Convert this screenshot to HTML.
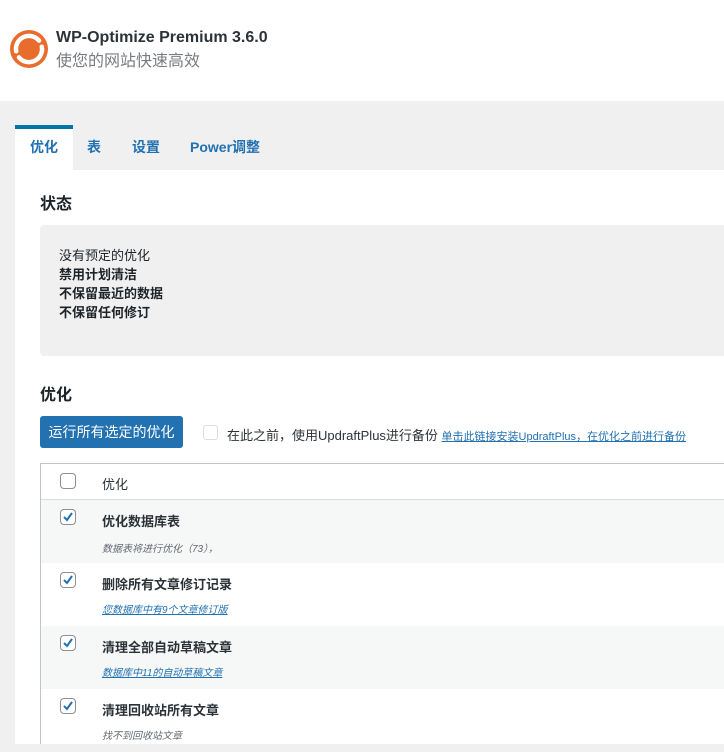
<!DOCTYPE html>
<html><head><meta charset="utf-8"><style>
*{margin:0;padding:0;box-sizing:border-box}
body{width:724px;height:744px;overflow:hidden;background:#f0f0f1;font-family:"Liberation Sans","Noto Sans CJK SC",sans-serif;color:#1d2327;position:relative}
.hdr{position:absolute;left:0;top:0;width:724px;height:101px;background:#fff}
.logo{position:absolute;left:9px;top:29px}
.t1{position:absolute;left:56px;top:29px;font-size:16px;font-weight:bold;color:#2c3338}
.t2{position:absolute;left:56px;top:47px;font-size:16px;color:#787c82}
.tab{position:absolute;top:137px;font-size:14px;font-weight:bold;color:#2271b1}
.act{position:absolute;left:15px;top:125px;width:58px;height:46px;background:#fff;border-top:4px solid #0073aa}
.main{position:absolute;left:15px;top:170px;width:709px;height:574px;background:#fff}
h2{position:absolute;left:40px;font-size:16px;font-weight:bold;color:#1d2327}
.status{position:absolute;left:40px;top:225px;width:684px;height:131px;background:#f0f0f1;border-radius:4px 0 0 4px;font-size:13px;line-height:19px;padding:21px 0 0 19px}
.btn{position:absolute;left:40px;top:416px;width:143px;height:32px;background:#2271b1;border-radius:3px;color:#fff;font-size:14px;line-height:32px;text-align:center}
.cb0{position:absolute;left:203px;top:425px;width:15px;height:15px;border:1px solid #ddd;border-radius:3px}
.bk{position:absolute;left:227px;top:425px;font-size:13px;color:#2c3338}
.bk a{color:#2271b1;font-size:11px;text-decoration:underline}
.tbl{position:absolute;left:40px;top:463px;width:684px;height:281px;border:1px solid #c3c4c7;border-right:none;border-bottom:none}
.row{position:absolute;left:0;width:684px;height:63px}
.cb{position:absolute;left:19px;width:16px;height:16px;border:1px solid #8c8f94;border-radius:4px;background:#fff}
.cb svg{position:absolute;left:0;top:0}
.nm{position:absolute;left:61px;font-size:13px;font-weight:bold;color:#2c3338}
.ds{position:absolute;left:61px;font-size:10px;font-style:italic;color:#646970}
.ds.l{color:#2271b1;text-decoration:underline}
</style></head><body>
<div class="hdr">
<svg class="logo" width="40" height="40" viewBox="0 0 40 40"><circle cx="20" cy="20" r="19" fill="#e86c2c"/><path d="M7.2 22.3 A13 13 0 0 1 30 11.6" fill="none" stroke="#fff" stroke-width="4.5" stroke-linecap="round"/><path d="M32.8 17.7 A13 13 0 0 1 10 28.4" fill="none" stroke="#fff" stroke-width="4.5" stroke-linecap="round"/><circle cx="20" cy="20" r="6.5" fill="#e86c2c"/></svg>
<div class="t1">WP-Optimize Premium 3.6.0</div>
<div class="t2">使您的网站快速高效</div>
</div>
<div class="act"></div>
<div class="tab" style="left:30px">优化</div>
<div class="tab" style="left:87px">表</div>
<div class="tab" style="left:132px">设置</div>
<div class="tab" style="left:190px">Power调整</div>
<div class="main"></div>
<h2 style="top:190px">状态</h2>
<div class="status">没有预定的优化<br><b>禁用计划清洁</b><br><b>不保留最近的数据</b><br><b>不保留任何修订</b></div>
<h2 style="top:381px">优化</h2>
<div class="btn">运行所有选定的优化</div>
<div class="cb0"></div>
<div class="bk">在此之前，使用UpdraftPlus进行备份 <a>单击此链接安装UpdraftPlus，在优化之前进行备份</a></div>
<div class="tbl">
<div class="row" style="top:0;height:36px;border-bottom:1px solid #dcdcde"><div class="cb" style="top:9px"></div><div class="nm" style="top:10px;font-weight:normal">优化</div></div>
<div class="row" style="top:36px;background:#f6f7f7"><div class="cb" style="top:9px"><svg width="14" height="14"><path d="M3 7l3 3 5-7" fill="none" stroke="#2271b1" stroke-width="2"/></svg></div><div class="nm" style="top:11px">优化数据库表</div><div class="ds" style="top:40px">数据表将进行优化（73），</div></div>
<div class="row" style="top:99px"><div class="cb" style="top:9px"><svg width="14" height="14"><path d="M3 7l3 3 5-7" fill="none" stroke="#2271b1" stroke-width="2"/></svg></div><div class="nm" style="top:11px">删除所有文章修订记录</div><div class="ds l" style="top:38px">您数据库中有9个文章修订版</div></div>
<div class="row" style="top:162px;background:#f6f7f7"><div class="cb" style="top:9px"><svg width="14" height="14"><path d="M3 7l3 3 5-7" fill="none" stroke="#2271b1" stroke-width="2"/></svg></div><div class="nm" style="top:11px">清理全部自动草稿文章</div><div class="ds l" style="top:38px">数据库中11的自动草稿文章</div></div>
<div class="row" style="top:225px"><div class="cb" style="top:9px"><svg width="14" height="14"><path d="M3 7l3 3 5-7" fill="none" stroke="#2271b1" stroke-width="2"/></svg></div><div class="nm" style="top:11px">清理回收站所有文章</div><div class="ds" style="top:38px">找不到回收站文章</div></div>
</div>
</body></html>
